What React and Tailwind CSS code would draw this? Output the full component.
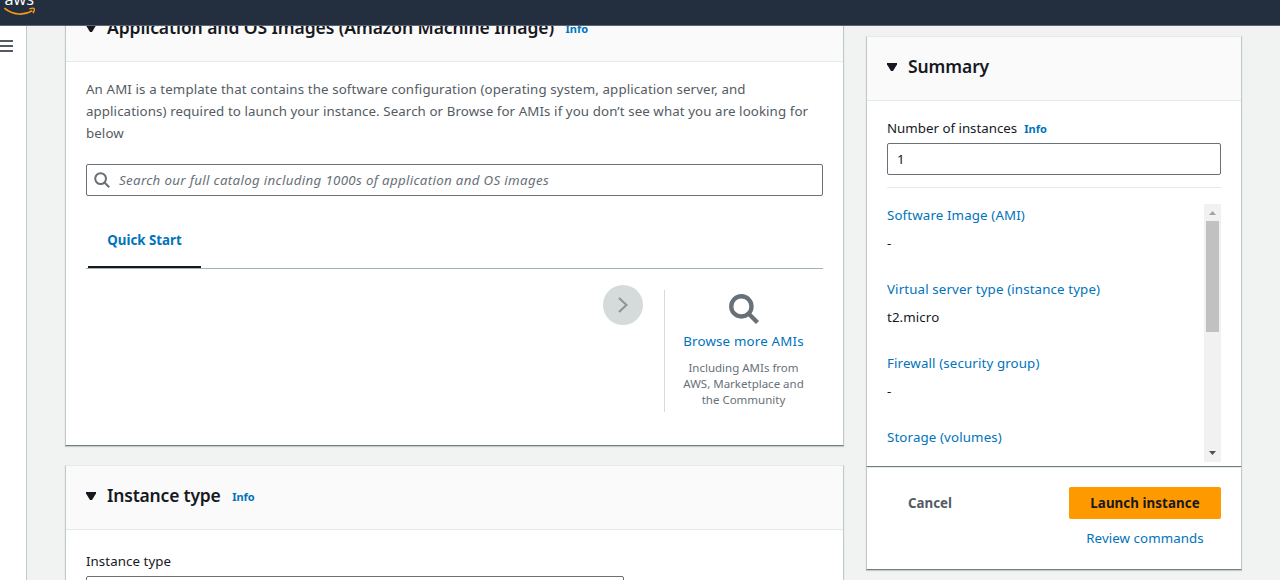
const Caret = ({ className = '' }) => (
  <svg className={`h-2 w-2.5 shrink-0 ${className}`} viewBox="0 0 10 8" fill="#16191f">
    <path d="M0 0H10V1.5L6 8H4L0 1.5Z" />
  </svg>
);

const Magnifier = ({ className = '', width }) => (
  <svg className={`shrink-0 ${className}`} viewBox="0 0 16 16" fill="none" stroke="currentColor" strokeWidth={width}>
    <circle cx="6.6" cy="6.6" r="5.4" />
    <path d="M10.5 10.5L15.2 15.2" />
  </svg>
);

const Info = ({ className = '' }) => (
  <a className={`text-[11px] leading-5 font-bold text-[#0073bb] ${className}`}>Info</a>
);

const panel = 'border border-x-[#c1c8c8] border-t-[#e6e9e9] border-b-[#71807f] bg-white shadow-[0_1px_1px_rgba(0,28,36,0.18)]';

const Panel = ({ title, titleClass = '', info, className = '', children }) => (
  <section className={`${panel} ${className}`}>
    <header className="flex h-16 items-center border-b border-[#e6e9e9] bg-[#fafafa] px-5 pb-1">
      <Caret />
      <h2 className={`-mt-0.5 ml-[11px] whitespace-nowrap text-[17.5px] leading-[22px] font-semibold text-[#16191f] ${titleClass}`}>{title}</h2>
      {info && <Info className="mt-[3px] ml-[11.5px]" />}
    </header>
    {children}
  </section>
);

const details = [
  { label: 'Software Image (AMI)', value: '-' },
  { label: 'Virtual server type (instance type)', value: 't2.micro' },
  { label: 'Firewall (security group)', value: '-' },
  { label: 'Storage (volumes)', value: '' },
];

export default function App() {
  return (
    <div className="flex h-[580px] w-[1280px] flex-col overflow-hidden bg-[#f1f3f3] font-['Noto_Sans',sans-serif] text-[13.3px] leading-[22px] text-[#16191f]">
      <nav className="flex h-[26px] shrink-0 items-end overflow-hidden border-b border-[#5d6470] bg-[#232f3e]">
        <svg className="ml-1 h-[25px] w-8 overflow-hidden" viewBox="0 0 32 25">
          <text x="0.5" y="5.2" fill="#fff" fontFamily="Open Sans, sans-serif" fontSize="16.5" fontWeight="500" textLength="29.5" lengthAdjust="spacingAndGlyphs">aws</text>
          <path d="M.3 8.2C9 15.2 20 15.8 28.4 10.6" fill="none" stroke="#f7981d" strokeWidth="1.7" />
          <path d="M25.3 8.9C28 8.2 30 8.1 30.3 8.7C30.7 9.5 30 11.4 29 13.2" fill="none" stroke="#f7981d" strokeWidth="1.4" />
        </svg>
      </nav>
      <div className="flex min-h-0 flex-1 overflow-hidden">
        <aside className="w-[27px] shrink-0 border-r border-[#c1c8c8] bg-white pt-3.5">
          <svg className="h-3 w-[13px]" viewBox="0 0 13 12" fill="#545b64">
            <path d="M0 0H13V2H0ZM0 5H13V7H0ZM0 10H13V12H0Z" />
          </svg>
        </aside>
        <main className="ml-[38px] w-[779px] shrink-0">
          <Panel title="Application and OS Images (Amazon Machine Image)" titleClass="tracking-[-0.085px]" info className="-mt-[29px] h-[449px]">
            <div className="px-5 pt-4">
              <p className="whitespace-nowrap tracking-[0.093px] text-[#545b64]">
                <span className="tracking-[0.12px]">An AMI is a template that contains the software configuration (operating system, application server, and</span><br />
                applications) required to launch your instance. Search or Browse for AMIs if you don’t see what you are looking for<br />
                below
              </p>
              <div className="mt-5 flex h-8 items-center rounded-[2px] border border-[#687078] px-[7px] text-[#687078]">
                <Magnifier className="h-4 w-4" width={2} />
                <span className="ml-[9px] whitespace-nowrap tracking-[0.33px] italic">Search our full catalog including 1000s of application and OS images</span>
              </div>
              <div className="mt-[30px] flex h-[43px] border-b border-[#a3b3b3] pl-0.5">
                <div className="flex w-[113px] justify-center border-b-2 border-[#16191f] pt-[3px] font-bold text-[#0073bb]">Quick Start</div>
              </div>
              <div className="flex justify-end">
                <button className="mt-4 mr-[21px] flex h-10 w-10 items-center justify-center rounded-full bg-[#d5dbdb]">
                  <svg className="h-4 w-3" viewBox="0 0 12 16" fill="none" stroke="#879596" strokeWidth="2">
                    <path d="M2 1L9.5 8L2 15" />
                  </svg>
                </button>
                <div className="mt-[21px] flex h-[122px] w-[159px] flex-col items-center border-l border-[#d5dbdb] pt-1 pr-px text-center">
                  <Magnifier className="h-[30px] w-[30px] text-[#687078]" width={2.3} />
                  <a className="mt-1.5 whitespace-nowrap tracking-[0.2px] text-[#0073bb]">Browse more AMIs</a>
                  <p className="mt-2 whitespace-nowrap text-[11.5px] leading-4 text-[#687078]">
                    Including AMIs from<br />AWS, Marketplace and<br />the Community
                  </p>
                </div>
              </div>
            </div>
          </Panel>
          <Panel title="Instance type" titleClass="tracking-[-0.2px]" info className="mt-[19px] h-[200px]">
            <div className="px-5 pt-5">
              <label className="block tracking-[0.07px]">Instance type</label>
              <div className="mt-1 h-8 w-[538px] rounded-[2px] border border-[#687078]" />
            </div>
          </Panel>
        </main>
        <div className="mt-2.5 ml-[22px] w-[376px] shrink-0">
          <Panel title="Summary" titleClass="tracking-[-0.1px]" className="h-[431px]">
            <div className="px-5 pt-4">
              <div className="flex h-[22px] items-center">
                <label>Number of instances</label>
                <Info className="mt-0.5 ml-[7px]" />
              </div>
              <div className="mt-1 flex h-8 items-center rounded-[2px] border border-[#687078] px-[9px]">1</div>
              <div className="mt-3 border-t border-[#e6e9e9]" />
              <div className="mt-4 flex h-[258px] justify-between overflow-hidden">
                <div>
                  {details.map(({ label, value }) => (
                    <div key={label} className="h-[74px]">
                      <div className="whitespace-nowrap tracking-[0.13px] text-[#0073bb]">{label}</div>
                      <div className="mt-1.5 tracking-[0.1px]">{value}</div>
                    </div>
                  ))}
                </div>
                <div className="flex w-[17px] flex-col items-center bg-[#f1f1f1]">
                  <svg className="h-[17px] w-[17px] shrink-0" viewBox="0 0 17 17" fill="#a3a3a3">
                    <path d="M5 11H12L8.5 7Z" />
                  </svg>
                  <div className="h-[111px] w-[13px] bg-[#c1c1c1]" />
                  <svg className="mt-auto h-[17px] w-[17px] shrink-0" viewBox="0 0 17 17" fill="#505050">
                    <path d="M5 6H12L8.5 10Z" />
                  </svg>
                </div>
              </div>
            </div>
          </Panel>
          <div className={`${panel} flex h-[103px] justify-between px-5 pt-[19px]`}>
            <button className="ml-[21px] h-8 font-bold text-[#545b64]">Cancel</button>
            <div className="flex w-[152px] flex-col items-center">
              <button className="h-8 w-full rounded-[2px] bg-[#ff9900] font-bold tracking-[0.08px] whitespace-nowrap">Launch instance</button>
              <a className="mt-2 whitespace-nowrap tracking-[0.08px] text-[#0073bb]">Review commands</a>
            </div>
          </div>
        </div>
      </div>
    </div>
  );
}
